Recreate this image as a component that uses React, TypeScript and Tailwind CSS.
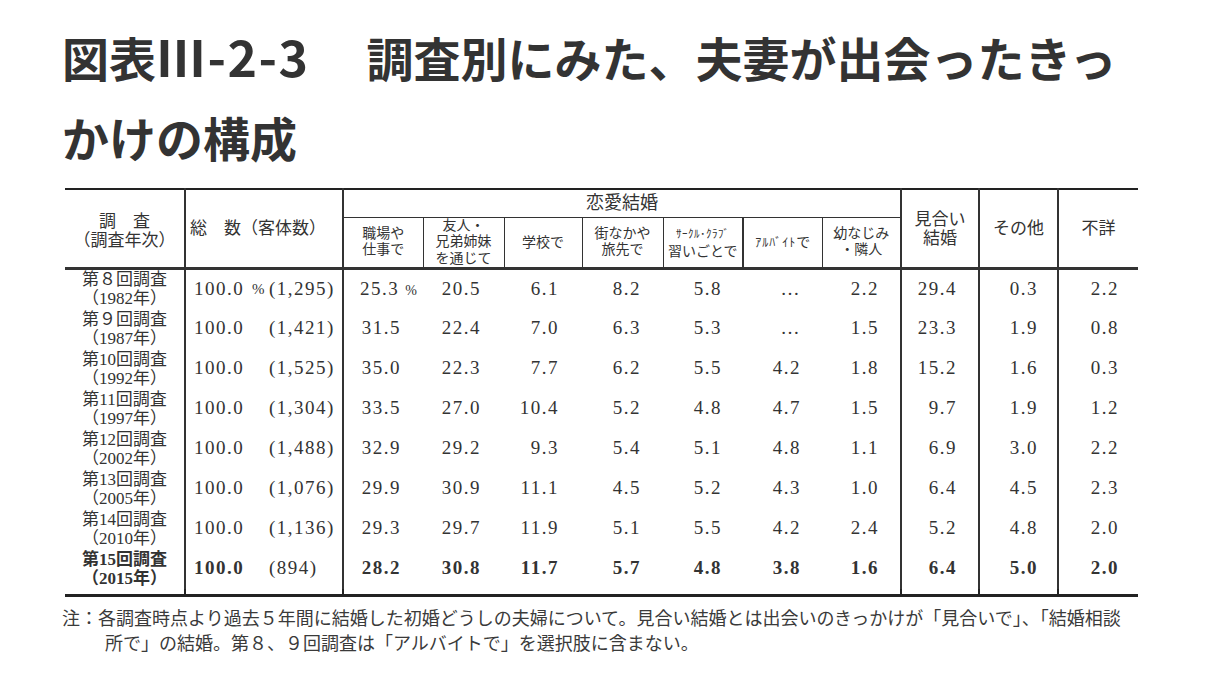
const rows = [
  { a: "第８回調査", b: "（1982年）", pct: true, n: "(1,295)", v: ["25.3", "20.5", "6.1", "8.2", "5.8", "…", "2.2", "29.4", "0.3", "2.2"] },
  { a: "第９回調査", b: "（1987年）", n: "(1,421)", v: ["31.5", "22.4", "7.0", "6.3", "5.3", "…", "1.5", "23.3", "1.9", "0.8"] },
  { a: "第10回調査", b: "（1992年）", n: "(1,525)", v: ["35.0", "22.3", "7.7", "6.2", "5.5", "4.2", "1.8", "15.2", "1.6", "0.3"] },
  { a: "第11回調査", b: "（1997年）", n: "(1,304)", v: ["33.5", "27.0", "10.4", "5.2", "4.8", "4.7", "1.5", "9.7", "1.9", "1.2"] },
  { a: "第12回調査", b: "（2002年）", n: "(1,488)", v: ["32.9", "29.2", "9.3", "5.4", "5.1", "4.8", "1.1", "6.9", "3.0", "2.2"] },
  { a: "第13回調査", b: "（2005年）", n: "(1,076)", v: ["29.9", "30.9", "11.1", "4.5", "5.2", "4.3", "1.0", "6.4", "4.5", "2.3"] },
  { a: "第14回調査", b: "（2010年）", n: "(1,136)", v: ["29.3", "29.7", "11.9", "5.1", "5.5", "4.2", "2.4", "5.2", "4.8", "2.0"] },
  { a: "第15回調査", b: "（2015年）", n: "(894)", v: ["28.2", "30.8", "11.7", "5.7", "4.8", "3.8", "1.6", "6.4", "5.0", "2.0"], bold: true },
];

// right padding per data column, borders where the body keeps its verticals
const dataCls = [
  "pr-[22px]",
  "pr-[23px]",
  "pr-[23px]",
  "pr-[22px]",
  "pr-[21px]",
  "pr-[21px]",
  "border-r-2 pr-[21px]",
  "border-r-2 pr-[21px]",
  "border-r-2 pr-[19px]",
  "pr-[19px]",
];

const widths = [120, 158, 80, 81, 78, 81, 80, 79, 79, 78, 79, 80];

function SubHead({ children, cls = "" }: { children: React.ReactNode; cls?: string }) {
  return (
    <th className={`h-[51px] border-b-[3px] border-[#333] p-0 text-center align-middle text-[14px] font-normal ${cls}`}>
      {children}
    </th>
  );
}

export default function App() {
  return (
    <main className="min-h-screen bg-white pl-[62px] pt-[15px] text-[#333]">
      <h1 className="whitespace-nowrap font-['Noto_Sans_CJK_JP',sans-serif] text-[47px] font-bold leading-[80px] text-[#333]">
        図表<span className="text-[50px] tracking-[1.5px]">Ⅲ-2-3</span>
        <span className="ml-[10px]">　調査別にみた、夫妻が出会ったきっ</span>
        <br />
        かけの構成
      </h1>

      <table className="mt-[11px] ml-[3px] w-[1073px] table-fixed border-collapse border-t-2 border-[#222] font-['Liberation_Serif','Noto_Sans_CJK_JP',serif] text-[#333]">
        <colgroup>
          {widths.map((w, i) => (
            <col key={i} style={{ width: w }} />
          ))}
        </colgroup>
        <thead>
          <tr>
            <th rowSpan={2} className="border-r-2 border-b-[3px] border-[#333] p-0 pt-[4px] text-center text-[17px] font-normal leading-[19px]">
              調　査
              <br />
              （調査年次）
            </th>
            <th rowSpan={2} className="border-r-2 border-b-[3px] border-[#333] p-0 pl-[4px] text-left text-[17px] font-normal leading-[19px]">
              総　数（客体数）
            </th>
            <th colSpan={7} className="h-[28px] border-r-2 border-b border-[#333] p-0 text-center text-[18px] font-normal leading-[20px]">
              恋愛結婚
            </th>
            <th rowSpan={2} className="border-r-2 border-b-[3px] border-[#333] p-0 text-center text-[17px] font-normal leading-[19px]">
              見合い
              <br />
              結婚
            </th>
            <th rowSpan={2} className="border-r-2 border-b-[3px] border-[#333] p-0 text-center text-[17px] font-normal">
              その他
            </th>
            <th rowSpan={2} className="border-b-[3px] border-[#333] p-0 text-center text-[17px] font-normal">
              不詳
            </th>
          </tr>
          <tr>
            <SubHead cls="border-r leading-[16px]">
              職場や
              <br />
              仕事で
            </SubHead>
            <SubHead cls="border-r leading-[16.5px]">
              友人・
              <br />
              兄弟姉妹
              <br />
              を通じて
            </SubHead>
            <SubHead cls="border-r">学校で</SubHead>
            <SubHead cls="border-r leading-[16px]">
              街なかや
              <br />
              旅先で
            </SubHead>
            <SubHead cls="border-r-2 leading-[17px]">
              <span className="text-[11px] tracking-[0.5px]">ｻｰｸﾙ･ｸﾗﾌﾞ</span>
              <br />
              習いごとで
            </SubHead>
            <SubHead cls="border-r">
              <span className="text-[12px] tracking-[1px]">ｱﾙﾊﾞｲﾄ</span>で
            </SubHead>
            <SubHead cls="border-r-2 leading-[16px]">
              幼なじみ
              <br />
              ・隣人
            </SubHead>
          </tr>
        </thead>
        <tbody>
          {rows.map((r) => (
            <tr key={r.a} className="h-[40px]">
              <td className={`border-r-2 border-[#333] p-0 text-center text-[17px] leading-[19px] ${r.bold ? "font-bold" : ""}`}>
                {r.a}
                <br />
                {r.b}
              </td>
              <td className="border-r-2 border-[#333] p-0 pl-[8px] text-[19px] tracking-[1.5px]">
                <div className="flex items-center">
                  <span className={`w-[58px] ${r.bold ? "font-bold" : ""}`}>100.0</span>
                  <span className="w-[17px] text-[15px] tracking-normal">{r.pct ? "%" : ""}</span>
                  <span>{r.n}</span>
                </div>
              </td>
              {r.v.map((v, i) => (
                <td
                  key={i}
                  className={`border-[#333] p-0 text-right text-[19px] tracking-[1.5px] ${
                    r.pct && i === 0 ? "pr-[6px]" : dataCls[i]
                  } ${r.bold ? "font-bold" : ""}`}
                >
                  {v}
                  {r.pct && i === 0 && <span className="ml-[6px] text-[14px] tracking-normal">%</span>}
                </td>
              ))}
            </tr>
          ))}
          <tr className="h-[7px]">
            <td className="border-r-2 border-b-[3px] border-[#222] p-0" />
            <td className="border-r-2 border-b-[3px] border-[#222] p-0" />
            <td colSpan={7} className="border-r-2 border-b-[3px] border-[#222] p-0" />
            <td className="border-r-2 border-b-[3px] border-[#222] p-0" />
            <td className="border-r-2 border-b-[3px] border-[#222] p-0" />
            <td className="border-b-[3px] border-[#222] p-0" />
          </tr>
        </tbody>
      </table>

      <div className="mt-[8px] font-['Noto_Sans_CJK_JP',sans-serif] text-[18px] leading-[25px] text-[#3a3a3a]">
        <p className="whitespace-nowrap">
          注：各調査時点より過去５年間に結婚した初婚どうしの夫婦について。見合い結婚とは出会いのきっかけが「見合いで」、「結婚相談
        </p>
        <p className="whitespace-nowrap pl-[43px]">所で」の結婚。第８、９回調査は「アルバイトで」を選択肢に含まない。</p>
      </div>
    </main>
  );
}
